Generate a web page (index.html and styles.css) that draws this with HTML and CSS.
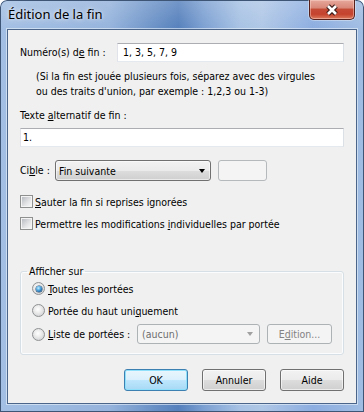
FILE: index.html
```html
<!DOCTYPE html>
<html lang="fr">
<head>
<meta charset="utf-8">
<title>Édition de la fin</title>
<link rel="stylesheet" href="styles.css">
</head>
<body>
<div class="window">
  <div class="titlebar">
    <span class="title">Édition de la fin</span>
    <div class="close">
      <svg width="16" height="12" viewBox="0 0 16 12">
        <path d="M4 2 L12 10 M12 2 L4 10" stroke="#3b1a18" stroke-width="5" fill="none"/>
        <path d="M4 2 L12 10 M12 2 L4 10" stroke="#ffffff" stroke-width="2.6" fill="none"/>
      </svg>
    </div>
  </div>
  <div class="client">
    <div class="row row-num">
      <span class="lbl-num">Numéro(s) d<u>e</u> fin :</span>
      <div class="edit edit-num">1, 3, 5, 7, 9</div>
    </div>
    <p class="help">(Si la fin est jouée plusieurs fois, séparez avec des virgules<br>ou des traits d'union, par exemple : 1,2,3 ou 1-3)</p>
    <div class="lbl-alt">Texte <u>a</u>lternatif de fin :</div>
    <div class="edit edit-alt">1.</div>
    <div class="row row-cible">
      <span class="lbl-cible">Ci<u>b</u>le :</span>
      <div class="combo">
        <span>Fin suivante</span>
        <span class="arrow"></span>
      </div>
      <div class="blank"></div>
    </div>
    <div class="check check-1"><span class="cb"></span><span><u>S</u>auter la fin si reprises ignorées</span></div>
    <div class="check check-2"><span class="cb"></span><span>Permettre les modifications <u>i</u>ndividuelles par portée</span></div>
    <fieldset class="group">
      <legend>Afficher sur</legend>
      <div class="radios">
        <div class="radio-row"><span class="rb on"></span><span><u>T</u>outes les portées</span></div>
        <div class="radio-row"><span class="rb"></span><span>Portée du haut uni<u>q</u>uement</span></div>
        <div class="radio-row row-list">
          <div class="radio-lbl"><span class="rb"></span><span><u>L</u>iste de portées :</span></div>
          <div class="combo disabled combo-list"><span>(aucun)</span><span class="arrow"></span></div>
          <div class="btn disabled btn-edit">E<u>d</u>ition...</div>
        </div>
      </div>
    </fieldset>
    <div class="buttons">
      <div class="btn default">OK</div>
      <div class="btn">Annuler</div>
      <div class="btn">Aide</div>
    </div>
  </div>
</div>
</body>
</html>
```
FILE: styles.css
```css
* { box-sizing: border-box; }
html, body { margin: 0; padding: 0; }
body { background: #fff; }

.window {
  width: 364px;
  height: 412px;
  display: flex;
  flex-direction: column;
  border-radius: 7px 7px 0 0;
  background:
    linear-gradient(to bottom, rgba(255,255,255,0.18) 0, rgba(255,255,255,0) 30px),
    linear-gradient(to right, #a3bfe3 0%, #95b3dc 30%, #6b92c7 42%, #5580bc 49%, #7ca0d2 56%, #a7c2e4 66%, #afc7e6 72%, #8cade0 86%, #a1bde2 100%);
  box-shadow: inset 0 0 0 1px #3e5576;
  font-family: "DejaVu Sans Condensed", "Liberation Sans", sans-serif;
  font-size: 10.5px;
  color: #000;
  overflow: hidden;
}

.titlebar {
  height: 29px;
  flex: none;
  display: flex;
  justify-content: space-between;
  align-items: flex-start;
  padding: 0 9px 0 8px;
}
.title {
  margin-top: 6px;
  font-family: "Noto Sans", "Open Sans", sans-serif;
  font-size: 13px;
  line-height: 17px;
  color: #000;
  text-shadow: 0 0 6px rgba(255,255,255,0.8), 0 0 3px rgba(255,255,255,0.6);
}
.close {
  width: 46px;
  height: 20px;
  border: 1px solid #57201a;
  border-top: none;
  border-radius: 0 0 5px 5px;
  background: linear-gradient(to bottom, #e6a89c 0%, #d9897a 40%, #c54a36 50%, #c4432f 75%, #db7a5d 100%);
  box-shadow: inset 0 0 0 1px rgba(255,220,210,0.45), 0 0 0 1px rgba(255,255,255,0.35);
  display: flex;
  align-items: center;
  justify-content: center;
}
.close svg { display: block; }

.client {
  flex: 1;
  margin: 0 7px 8px 7px;
  border: 1px solid #4a6589;
  box-shadow: 0 0 0 1px rgba(235,243,252,0.6);
  background: #f0f0f0;
  padding: 13px 12px 12px 12px;
  display: flex;
  flex-direction: column;
}

u { text-decoration: underline; text-underline-offset: 1px; }

.row { display: flex; align-items: center; }
.row-num { height: 19px; }
.lbl-num { width: 97px; flex: none; line-height: 15px; }

.edit {
  height: 19px;
  border: 1px solid;
  border-color: #abadb3 #dbdfe6 #e3e9ef #e2e3ea;
  background: #fff;
  line-height: 17px;
  white-space: nowrap;
}
.edit-num { flex: 1; padding-left: 5px; }
.edit-alt { margin-top: 5px; padding-left: 2px; }

.help {
  margin: 7px 0 0 16px;
  line-height: 15px;
}
.lbl-alt { margin-top: 9px; line-height: 15px; }

.row-cible { margin-top: 13px; height: 21px; }
.lbl-cible { width: 35px; flex: none; line-height: 15px; }

.combo {
  height: 21px;
  border: 1px solid #707070;
  border-radius: 3px;
  background: linear-gradient(to bottom, #f2f2f2 0%, #ebebeb 50%, #dddddd 51%, #cfcfcf 100%);
  box-shadow: inset 0 0 0 1px rgba(255,255,255,0.55);
  display: flex;
  align-items: center;
  padding-left: 3px;
  white-space: nowrap;
}
.row-cible .combo { width: 156px; flex: none; }
.arrow {
  margin-left: auto;
  margin-right: 5px;
  width: 0;
  height: 0;
  border-left: 3.5px solid transparent;
  border-right: 3.5px solid transparent;
  border-top: 4px solid #000;
}
.blank {
  width: 49px;
  height: 21px;
  margin-left: 7px;
  border: 1px solid #b5b9bc;
  border-radius: 3px;
  background: #f4f4f4;
}

.check { display: flex; align-items: center; height: 15px; }
.check-1 { margin-top: 13px; }
.check-2 { margin-top: 7px; }
.cb {
  width: 13px;
  height: 13px;
  flex: none;
  margin-right: 2px;
  border: 1px solid #8e8f8f;
  padding: 1px;
  background: linear-gradient(135deg, #b9bdc2 0%, #e3e4e6 60%, #f6f6f6 100%) content-box, #f4f4f4;
}

.group {
  margin: 33px 0 0 0;
  padding: 0;
  border: 1px solid #d5dfe5;
  border-radius: 3px;
  box-shadow: inset 0 0 0 1px #fbfcfd;
  min-width: 0;
}
.group legend {
  margin-left: 6px;
  padding: 0 2px;
  line-height: 15px;
}
.radios {
  padding: 2px 11px 10px 11px;
  display: flex;
  flex-direction: column;
  gap: 7px;
}
.radio-row { display: flex; align-items: center; height: 15px; }
.radio-row.row-list { height: 20px; margin-top: -1px; }
.radio-lbl { display: flex; align-items: center; width: 105px; flex: none; }
.rb {
  position: relative;
  width: 13px;
  height: 13px;
  flex: none;
  margin-right: 3px;
  border-radius: 50%;
  border: 1px solid #8f9192;
  background: radial-gradient(circle at 45% 40%, #ffffff 0%, #eeeeee 35%, #d3d4d6 80%, #c3c5c8 100%);
}
.rb.on::after {
  content: "";
  position: absolute;
  left: 2.5px;
  top: 2.5px;
  width: 6px;
  height: 6px;
  border-radius: 50%;
  background: radial-gradient(circle at 40% 35%, #c6ecff 0%, #5db3e6 35%, #1d6aa8 70%, #133f6a 100%);
  box-shadow: 0 0 0 0.5px #1f3f62;
}

.combo.disabled {
  border-color: #adb2b5;
  background: #f4f4f4;
  box-shadow: none;
  color: #6d6d6d;
  padding-left: 4px;
}
.combo.disabled .arrow { border-top-color: #a0a0a0; margin-right: 6px; }
.combo-list { width: 123px; height: 20px; flex: none; }

.btn {
  height: 22px;
  width: 64px;
  border: 1px solid #707070;
  border-radius: 3px;
  background: linear-gradient(to bottom, #f2f2f2 0%, #ebebeb 50%, #dddddd 51%, #cfcfcf 100%);
  box-shadow: inset 0 0 0 1px rgba(255,255,255,0.6);
  display: flex;
  align-items: center;
  justify-content: center;
  white-space: nowrap;
}
.btn.default {
  border-color: #3c7fb1;
  background: linear-gradient(to bottom, #eaf6fd 0%, #d9f0fc 50%, #bee6fd 51%, #a7d9f5 100%);
  box-shadow: inset 0 0 0 1px #8fe0fb;
}
.btn.disabled {
  border-color: #adb2b5;
  background: #f4f4f4;
  box-shadow: none;
  color: #838383;
}
.btn-edit { width: 65px; height: 20px; margin-left: 7px; }

.buttons {
  margin-top: 14px;
  display: flex;
  justify-content: flex-end;
  gap: 14px;
}
```
